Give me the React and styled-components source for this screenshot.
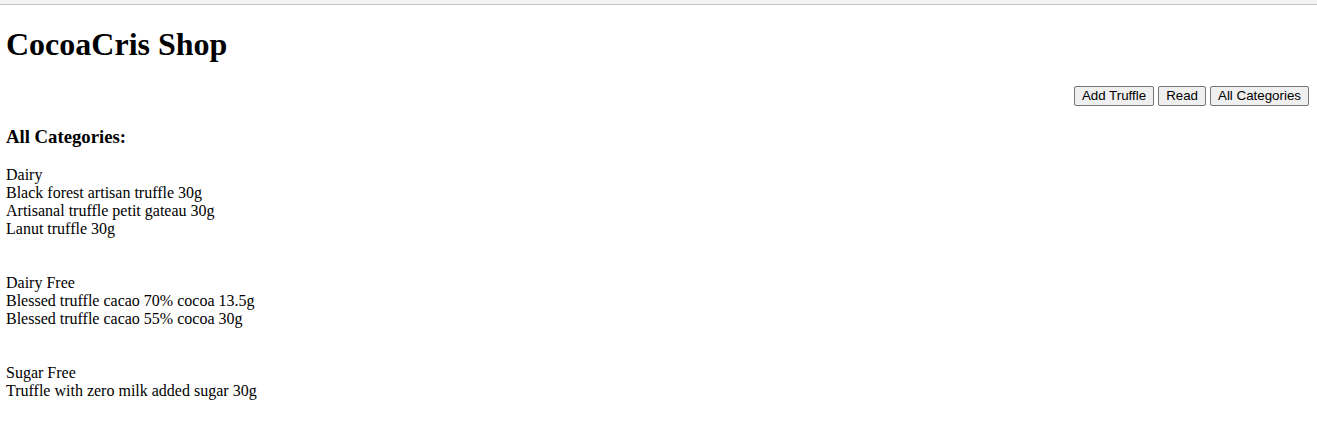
import styled, { createGlobalStyle } from 'styled-components'

const categories = [
	{
		name: 'Dairy',
		truffles: [
			'Black forest artisan truffle 30g',
			'Artisanal truffle petit gateau 30g',
			'Lanut truffle 30g',
		],
	},
	{
		name: 'Dairy Free',
		truffles: [
			'Blessed truffle cacao 70% cocoa 13.5g',
			'Blessed truffle cacao 55% cocoa 30g',
		],
	},
	{
		name: 'Sugar Free',
		truffles: ['Truffle with zero milk added sugar 30g'],
	},
]

function App() {
	return (
		<>
			<GlobalStyle />
			<TopBand />
			<Page>
				<Title>CocoaCris Shop</Title>
				<Toolbar>
					<Button>Add Truffle</Button>
					<Button>Read</Button>
					<Button>All Categories</Button>
				</Toolbar>
				<SectionTitle>All Categories:</SectionTitle>
				{categories.map((category) => (
					<Category key={category.name}>
						<Line>{category.name}</Line>
						{category.truffles.map((truffle) => (
							<Line key={truffle}>{truffle}</Line>
						))}
					</Category>
				))}
			</Page>
		</>
	)
}

export default App

const GlobalStyle = createGlobalStyle`
	body {
		margin: 0;
		background: #ffffff;
		color: #000000;
		font-family: "Liberation Serif", "Times New Roman", serif;
		font-size: 16px;
	}
`

const TopBand = styled.div`
	height: 4px;
	background-color: #f4f4f4;
	border-bottom: 1px solid #c6c6c6;
`

const Page = styled.div`
	padding: 0 8px 0 6px;
	overflow: hidden;
`

const Title = styled.h1`
	font-size: 32px;
	font-weight: bold;
	margin: 21.44px 0;
`

const Toolbar = styled.div`
	display: flex;
	justify-content: flex-end;
	gap: 4px;
	height: 22px;
	align-items: center;
`

const Button = styled.button`
	font-family: "Liberation Sans", Arial, sans-serif;
	font-size: 13.33px;
	color: #000000;
	background-color: #efefef;
	border: 1px solid #767676;
	border-radius: 2px;
	padding: 1px 7px;
	height: 20px;
	line-height: 16px;
`

const SectionTitle = styled.h3`
	font-size: 18.72px;
	font-weight: bold;
	margin: 18.72px 0;
`

const Category = styled.div`
	margin-bottom: 36px;
`

const Line = styled.div`
	line-height: 18px;
`
